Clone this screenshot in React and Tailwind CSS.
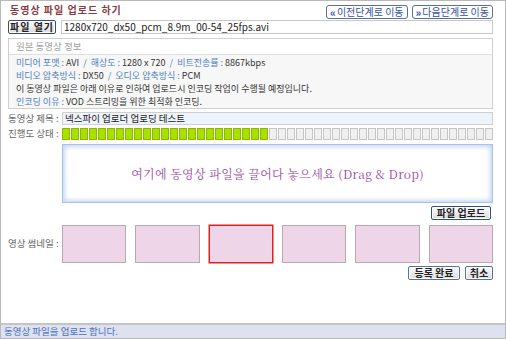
import React from "react";

const font = { fontFamily: '"Noto Sans CJK KR", "Noto Sans", sans-serif' };

function NavButton({ arrow, label }) {
  return (
    <button className="h-[14px] px-[3px] flex items-center gap-[1px] border border-[#5a6f9a] rounded-[3px] bg-white text-[10px] leading-none text-[#3553a0] whitespace-nowrap">
      <span className="font-bold text-[11px] leading-none">{arrow}</span>
      {label}
    </button>
  );
}

function GrayButton({ children, className = "" }) {
  return (
    <button
      className={`h-[14px] px-[2px] flex items-center justify-center whitespace-nowrap border border-[#3c4c6c] rounded-[2px] bg-gradient-to-b from-[#fafafa] to-[#dcdcdc] shadow-[inset_0_0_0_1px_#ffffff] text-[10px] leading-none font-bold text-[#222] ${className}`}
    >
      {children}
    </button>
  );
}

function InfoLine({ children }) {
  return <div className="h-[13px] flex items-center whitespace-pre leading-none">{children}</div>;
}

function Label({ children }) {
  return <span className="text-[#4f7fbf]">{children}</span>;
}

const TOTAL = 48;
const DONE = 23;

export default function App() {
  const cells = Array.from({ length: TOTAL }, (_, i) => i < DONE);
  const thumbs = [0, 1, 2, 3, 4, 5];

  return (
    <div className="w-[506px] h-[339px] bg-white flex flex-col border border-[#b9b9b9]" style={font}>
      {/* main */}
      <div className="flex-1 flex flex-col pl-[7px] pr-[12px]">
        {/* title row */}
        <div className="h-[18px] flex items-end justify-between">
          <h1 className="text-[10px] leading-none font-bold tracking-[1px] text-[#8a3a44] pl-[2px] pb-[4px]">
            동영상 파일 업로드 하기
          </h1>
          <div className="flex gap-[4px]">
            <NavButton arrow="«" label="이전단계로 이동" />
            <NavButton arrow="»" label="다음단계로 이동" />
          </div>
        </div>

        {/* open file row */}
        <div className="mt-[1px] h-[14px] flex items-center gap-[5px]">
          <GrayButton className="w-[48px] tracking-[1px]">파일 열기</GrayButton>
          <div className="flex-1 h-[14px] border border-[#c8c8c8] bg-white px-[2px] flex items-center text-[10px] leading-none text-[#222]">
            1280x720_dx50_pcm_8.9m_00-54_25fps.avi
          </div>
        </div>

        {/* original info */}
        <div className="mt-[4px] h-[71px] border border-[#cfcfcf] flex flex-col">
          <div className="h-[16px] px-[7px] flex items-center text-[9.5px] leading-none text-[#a0a0a0] bg-white border-b border-[#dedede]">
            원본 동영상 정보
          </div>
          <div className="flex-1 bg-[#f7f7f7] px-[7px] pt-[1px] text-[9px] text-[#333]">
            <InfoLine>
              <Label>미디어 포맷 : </Label>AVI<Label>  /  해상도 : </Label>1280 x 720<Label>  /  비트전송률 : </Label>8867kbps
            </InfoLine>
            <InfoLine>
              <Label>비디오 압축방식 : </Label>DX50<Label>  /  오디오 압축방식 : </Label>PCM
            </InfoLine>
            <InfoLine>이 동영상 파일은 아래 이유로 인하여 업로드시 인코딩 작업이 수행될 예정입니다.</InfoLine>
            <InfoLine>
              <Label>인코딩 이유 : </Label>VOD 스트리밍을 위한 최적화 인코딩.
            </InfoLine>
          </div>
        </div>

        {/* video title */}
        <div className="mt-[3px] h-[13px] flex items-center">
          <span className="w-[54px] shrink-0 text-[9.5px] text-[#666] leading-none whitespace-nowrap">동영상 제목 :</span>
          <div className="flex-1 h-[13px] border border-[#cfcfcf] bg-[#eef4fb] px-[2px] flex items-center text-[9.5px] leading-none text-[#222]">
            넥스파이 업로더 업로딩 테스트
          </div>
        </div>

        {/* progress */}
        <div className="mt-[3px] h-[12px] flex items-center">
          <span className="w-[54px] shrink-0 text-[9.5px] text-[#666] leading-none whitespace-nowrap">진행도 상태 :</span>
          <div className="flex-1 flex gap-[1px]">
            {cells.map((on, i) => (
              <div
                key={i}
                className={
                  on
                    ? "flex-1 h-[12px] bg-[#a8e000] border border-[#8cb800]"
                    : "flex-1 h-[12px] bg-[#f0f0f0] border border-[#c4c4c4]"
                }
              />
            ))}
          </div>
        </div>

        {/* drop zone */}
        <div className="mt-[4px] flex">
          <div className="w-[54px] shrink-0" />
          <div className="flex-1 h-[59px] border border-[#a9c2ea] bg-white shadow-[inset_0_0_4px_2px_#c5d7f3] flex items-center justify-center">
            <span
              className="text-[12px] leading-none text-[#9a4a9f] tracking-[0.3px]"
              style={{ fontFamily: '"Noto Serif CJK KR", "Liberation Serif", "Noto Sans CJK KR", serif' }}
            >
              여기에 동영상 파일을 끌어다 놓으세요 (Drag &amp; Drop)
            </span>
          </div>
        </div>

        {/* upload button */}
        <div className="mt-[3px] flex justify-end pr-[2px]">
          <GrayButton className="w-[60px] !border-[#2f4f86]">파일 업로드</GrayButton>
        </div>

        {/* thumbnails */}
        <div className="mt-[5px] flex items-center">
          <span className="w-[54px] shrink-0 text-[9.5px] text-[#666] leading-none whitespace-nowrap">영상 썸네일 :</span>
          <div className="flex-1 flex gap-[9px]">
            {thumbs.map((t) => (
              <div
                key={t}
                className={
                  t === 2
                    ? "flex-1 h-[38px] bg-[#eed5e7] border border-[#e02020] shadow-[0_0_0_0.5px_#e02020]"
                    : "flex-1 h-[38px] bg-[#eed5e7] border border-[#b7a9b1]"
                }
              />
            ))}
          </div>
        </div>

        {/* bottom buttons */}
        <div className="mt-[3px] flex justify-end gap-[5px]">
          <GrayButton className="w-[52px] !border-[#5a6f9a]">등록 완료</GrayButton>
          <GrayButton className="w-[28px] !border-[#5a6f9a]">취소</GrayButton>
        </div>
      </div>

      {/* status bar */}
      <div className="h-[15px] border-t-2 border-[#c4c4c4] bg-[#dde1f0] px-[3px] flex items-center text-[9.5px] leading-none text-[#4a72c4]">
        동영상 파일을 업로드 합니다.
      </div>
    </div>
  );
}
